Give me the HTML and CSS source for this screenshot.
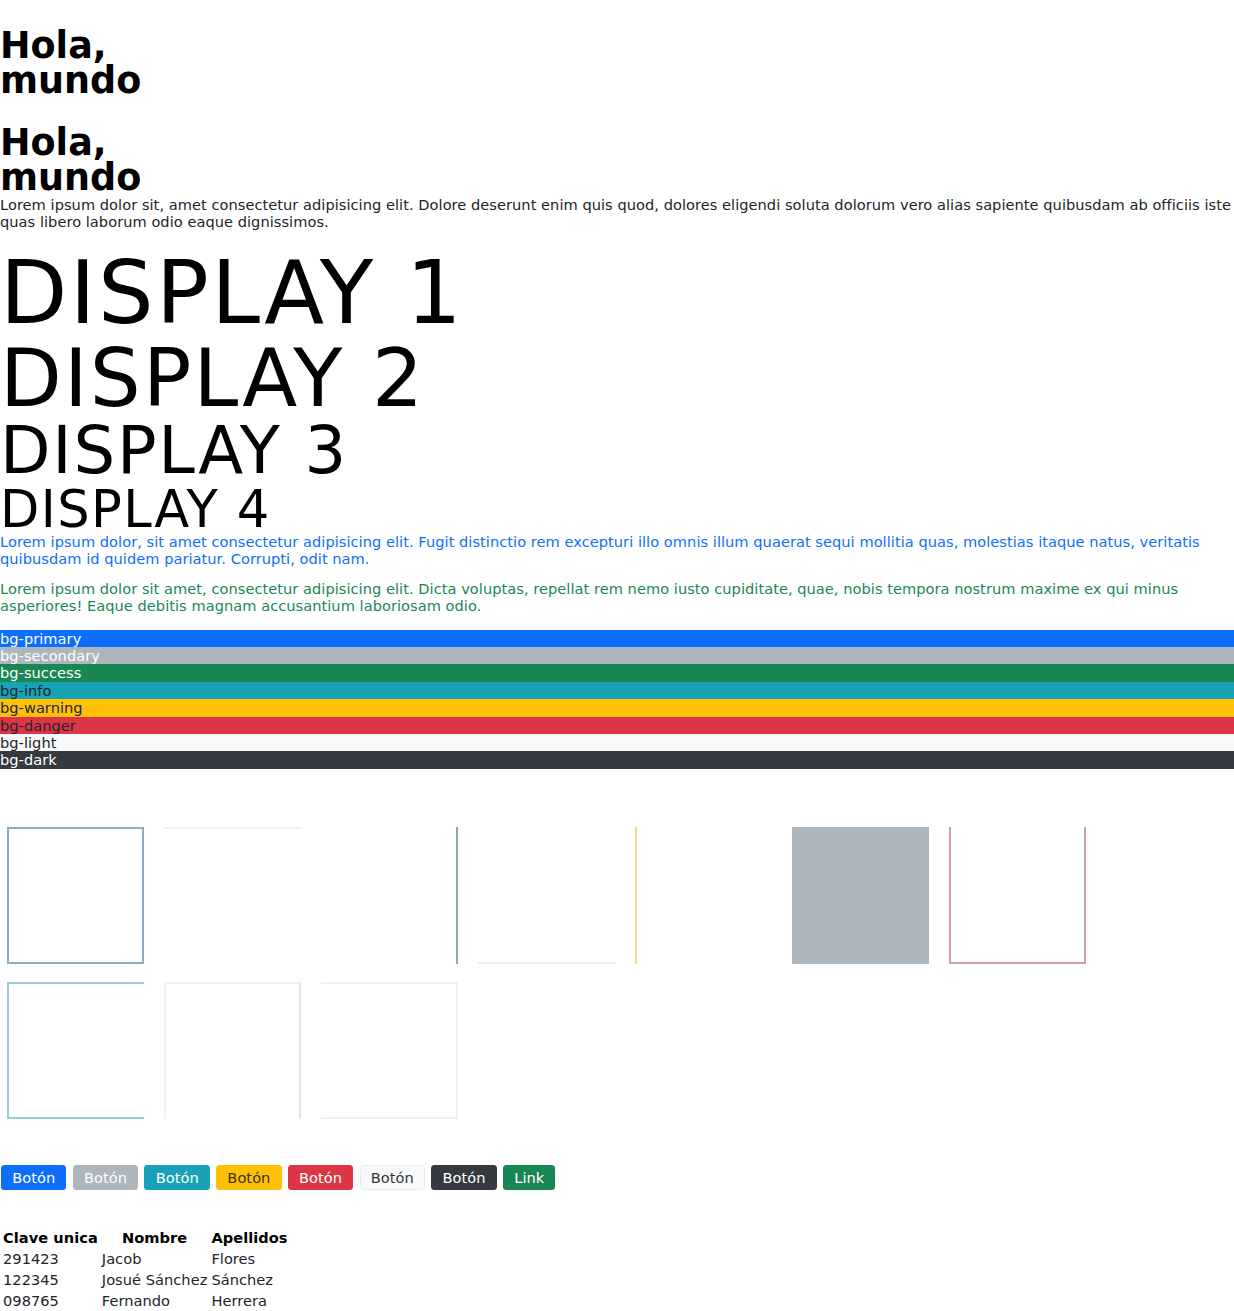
FILE: index.html
```html
<!DOCTYPE html>
<html lang="es">
<head>
<meta charset="utf-8">
<title>Hola, mundo</title>
<link rel="stylesheet" href="styles.css">
</head>
<body>
<h1 class="title first">Hola, mundo</h1>
<h1 class="title second">Hola, mundo</h1>
<p class="intro">Lorem ipsum dolor sit, amet consectetur adipisicing elit. Dolore deserunt enim quis quod, dolores eligendi soluta dolorum vero alias sapiente quibusdam ab officiis iste quas libero laborum odio eaque dignissimos.</p>
<h1 class="display display-1">DISPLAY 1</h1>
<h1 class="display display-2">DISPLAY 2</h1>
<h1 class="display display-3">DISPLAY 3</h1>
<h1 class="display display-4">DISPLAY 4</h1>
<p class="text text-primary">Lorem ipsum dolor, sit amet consectetur adipisicing elit. Fugit distinctio rem excepturi illo omnis illum quaerat sequi mollitia quas, molestias itaque natus, veritatis quibusdam id quidem pariatur. Corrupti, odit nam.</p>
<p class="text text-success">Lorem ipsum dolor sit amet, consectetur adipisicing elit. Dicta voluptas, repellat rem nemo iusto cupiditate, quae, nobis tempora nostrum maxime ex qui minus asperiores! Eaque debitis magnam accusantium laboriosam odio.</p>
<div class="bars">
  <div class="bar bg-primary">bg-primary</div>
  <div class="bar bg-secondary">bg-secondary</div>
  <div class="bar bg-success">bg-success</div>
  <div class="bar bg-info">bg-info</div>
  <div class="bar bg-warning">bg-warning</div>
  <div class="bar bg-danger">bg-danger</div>
  <div class="bar bg-light">bg-light</div>
  <div class="bar bg-dark">bg-dark</div>
</div>
<div class="boxes">
  <div class="box b1"></div>
  <div class="box b2"></div>
  <div class="box b3"></div>
  <div class="box b4"></div>
  <div class="box b5"></div>
  <div class="box b6"></div>
  <div class="box b7"></div>
  <div class="box b8"></div>
  <div class="box b9"></div>
  <div class="box b10"></div>
</div>
<div class="buttons">
  <button class="btn btn-primary">Botón</button>
  <button class="btn btn-secondary">Botón</button>
  <button class="btn btn-info">Botón</button>
  <button class="btn btn-warning">Botón</button>
  <button class="btn btn-danger">Botón</button>
  <button class="btn btn-light">Botón</button>
  <button class="btn btn-dark">Botón</button>
  <a class="btn btn-success" href="#">Link</a>
</div>
<table class="people">
  <thead>
    <tr><th>Clave unica</th><th>Nombre</th><th>Apellidos</th></tr>
  </thead>
  <tbody>
    <tr><td>291423</td><td>Jacob</td><td>Flores</td></tr>
    <tr><td>122345</td><td>Josué Sánchez</td><td>Sánchez</td></tr>
    <tr><td>098765</td><td>Fernando</td><td>Herrera</td></tr>
  </tbody>
</table>
</body>
</html>
```
FILE: styles.css
```css
html, body {
  margin: 0;
  padding: 0;
  background: #fff;
}
body {
  font-family: "DejaVu Sans", sans-serif;
  font-size: 14.6px;
  line-height: 17px;
  letter-spacing: 0.04px;
  color: #212529;
}
.title {
  width: min-content;
  font-size: 36.5px;
  line-height: 35px;
  font-weight: bold;
  letter-spacing: 0;
  color: #000;
}
.title.first {
  margin: 28px 0 27px;
}
.title.second {
  margin: 0;
}
.intro {
  margin: 1px 0 20px;
}
.display {
  margin: 0;
  font-weight: normal;
  line-height: 1;
  letter-spacing: 0.027em;
  color: #000;
}
.display-1 { font-size: 87.6px; }
.display-2 { font-size: 80.3px; }
.display-3 { font-size: 65.7px; }
.display-4 { font-size: 51.1px; }
.text {
  margin: -2px 0 15px;
}
.text-primary { color: #0d6efd; }
.text-success { color: #198754; }

.bars {
  display: flex;
  flex-direction: column;
  padding-top: 1px;
}
.bar {
  height: 17.375px;
  line-height: 17px;
  color: #212529;
}
.bg-primary { background: #0d6efd; color: #fff; }
.bg-secondary { background: #adb5bd; color: #fff; }
.bg-success { background: #198754; color: #fff; }
.bg-info { background: #17a2b8; }
.bg-warning { background: #ffc107; }
.bg-danger { background: #dc3545; }
.bg-light { background: #f8f9fa; }
.bg-dark { background: #343a40; color: #fff; }

.boxes {
  display: flex;
  flex-wrap: wrap;
  column-gap: 20px;
  row-gap: 18px;
  padding: 58px 0 0 7px;
}
.box {
  box-sizing: border-box;
  width: 137px;
  height: 137px;
}
.b1 { border: 2px solid #8aaccf; }
.b2 { border-top: 2px solid #eef0f2; }
.b3 { border-right: 2px solid #86b09c; }
.b4 { border-bottom: 2px solid #eef0f2; }
.b5 { border-left: 2px solid #f3dc82; }
.b6 { background: #adb5bd; }
.b7 { border: 2px solid #d59ea4; border-top: 0; }
.b8 { border: 2px solid #98cdd2; border-right: 0; }
.b9 { border: 2px solid #eef0f2; border-bottom: 0; border-right-color: #e2e5e8; }
.b10 { border: 2px solid #eef0f2; border-left: 0; }

.buttons {
  display: flex;
  gap: 6.3px;
  padding: 46px 0 0 1px;
}
.btn {
  box-sizing: border-box;
  display: inline-block;
  font-family: "DejaVu Sans", sans-serif;
  font-size: 14.6px;
  line-height: 17px;
  letter-spacing: 0.04px;
  padding: 3px 10.2px;
  border: 1px solid transparent;
  border-radius: 3.5px;
  text-decoration: none;
  cursor: pointer;
}
.btn-primary { background: #0d6efd; color: #fff; }
.btn-secondary { background: #adb5bd; color: #fff; }
.btn-info { background: #17a2b8; color: #fff; }
.btn-warning { background: #ffc107; color: #3b2f08; }
.btn-danger { background: #dc3545; color: #fff; }
.btn-light { background: #f8f9fa; color: #33373b; border-color: #e9ecef; }
.btn-dark { background: #343a40; color: #fff; }
.btn-success { background: #198754; color: #fff; }

.people {
  margin-top: 36px;
  border-spacing: 2px;
  font-size: 14.6px;
}
.people th, .people td {
  padding: 1px;
  line-height: 17px;
}
.people th {
  color: #000;
}
.people td {
  text-align: left;
}
```
